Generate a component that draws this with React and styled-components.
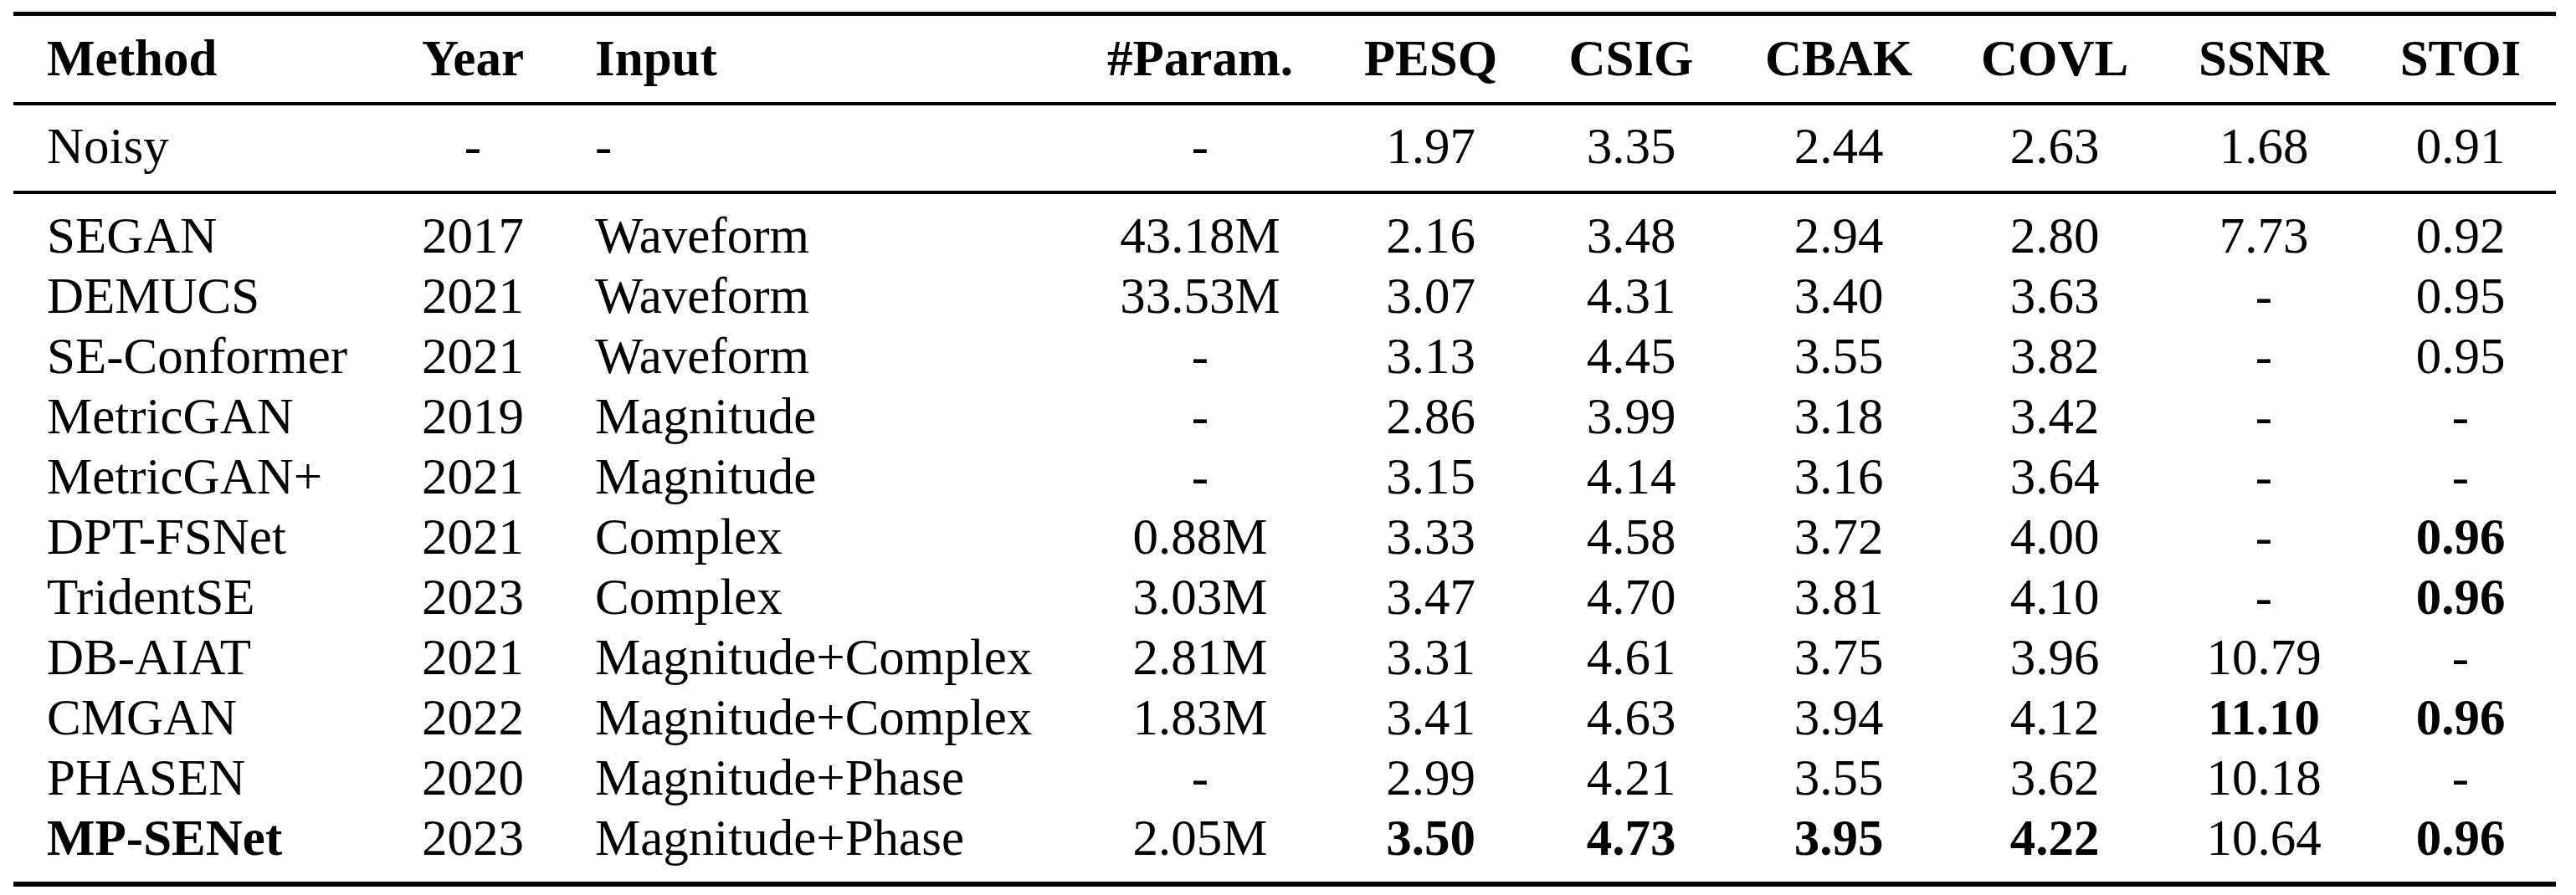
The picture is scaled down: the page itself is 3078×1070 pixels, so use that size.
import React from 'react';
import styled, { createGlobalStyle } from 'styled-components';

const GlobalStyle = createGlobalStyle`
    html, body {
        margin: 0;
        padding: 0;
        background: #ffffff;
    }
`;

const COLUMNS = '445px 208px 610px 310px 241px 238px 258px 258px 242px 228px';

const header = ['Method', 'Year', 'Input', '#Param.', 'PESQ', 'CSIG', 'CBAK', 'COVL', 'SSNR', 'STOI'];
const align = ['left', 'center', 'left', 'center', 'center', 'center', 'center', 'center', 'center', 'center'];

const noisy = ['Noisy', '-', '-', '-', '1.97', '3.35', '2.44', '2.63', '1.68', '0.91'];

// a leading * marks a bold value
const rows = [
    ['SEGAN', '2017', 'Waveform', '43.18M', '2.16', '3.48', '2.94', '2.80', '7.73', '0.92'],
    ['DEMUCS', '2021', 'Waveform', '33.53M', '3.07', '4.31', '3.40', '3.63', '-', '0.95'],
    ['SE-Conformer', '2021', 'Waveform', '-', '3.13', '4.45', '3.55', '3.82', '-', '0.95'],
    ['MetricGAN', '2019', 'Magnitude', '-', '2.86', '3.99', '3.18', '3.42', '-', '-'],
    ['MetricGAN+', '2021', 'Magnitude', '-', '3.15', '4.14', '3.16', '3.64', '-', '-'],
    ['DPT-FSNet', '2021', 'Complex', '0.88M', '3.33', '4.58', '3.72', '4.00', '-', '*0.96'],
    ['TridentSE', '2023', 'Complex', '3.03M', '3.47', '4.70', '3.81', '4.10', '-', '*0.96'],
    ['DB-AIAT', '2021', 'Magnitude+Complex', '2.81M', '3.31', '4.61', '3.75', '3.96', '10.79', '-'],
    ['CMGAN', '2022', 'Magnitude+Complex', '1.83M', '3.41', '4.63', '3.94', '4.12', '*11.10', '*0.96'],
    ['PHASEN', '2020', 'Magnitude+Phase', '-', '2.99', '4.21', '3.55', '3.62', '10.18', '-'],
    ['*MP-SENet', '2023', 'Magnitude+Phase', '2.05M', '*3.50', '*4.73', '*3.95', '*4.22', '10.64', '*0.96'],
];

function Row({ cells, bold }) {
    return (
        <Line>
            {cells.map((value, i) => {
                const strong = bold || value.startsWith('*');
                const text = value.startsWith('*') ? value.slice(1) : value;
                return (
                    <Cell key={i} $align={align[i]} $bold={strong} $first={i === 0}>
                        {text}
                    </Cell>
                );
            })}
        </Line>
    );
}

function App() {
    return (
        <Page>
            <GlobalStyle />
            <Table>
                <Rule $weight={5} />
                <Section $top={15} $bottom={16}>
                    <Row cells={header} bold />
                </Section>
                <Rule $weight={4} />
                <Section $top={13} $bottom={17}>
                    <Row cells={noisy} />
                </Section>
                <Rule $weight={4} />
                <Section $top={14} $bottom={16}>
                    {rows.map((r) => (
                        <Row key={r[0]} cells={r} />
                    ))}
                </Section>
                <Rule $weight={6} />
            </Table>
        </Page>
    );
}

const Page = styled.div`
    width: 3078px;
    height: 1070px;
    padding: 14px 0 0 16px;
    box-sizing: border-box;
    background: #ffffff;
    overflow: hidden;
`;

const Table = styled.div`
    width: 3038px;
    display: flex;
    flex-direction: column;

    color: #000000;
    font-family: 'Liberation Serif', 'Times New Roman', serif;
    font-size: 61px;
    line-height: 72px;
`;

const Rule = styled.div`
    height: ${(p) => p.$weight}px;
    background: #000000;
`;

const Section = styled.div`
    padding: ${(p) => p.$top}px 0 ${(p) => p.$bottom}px;
`;

const Line = styled.div`
    display: grid;
    grid-template-columns: ${COLUMNS};
    height: 72px;
`;

const Cell = styled.div`
    white-space: nowrap;
    text-align: ${(p) => p.$align};
    font-weight: ${(p) => (p.$bold ? 700 : 400)};
    padding-left: ${(p) => (p.$align === 'left' ? (p.$first ? '40px' : '42px') : '0')};
`;

export default App;
